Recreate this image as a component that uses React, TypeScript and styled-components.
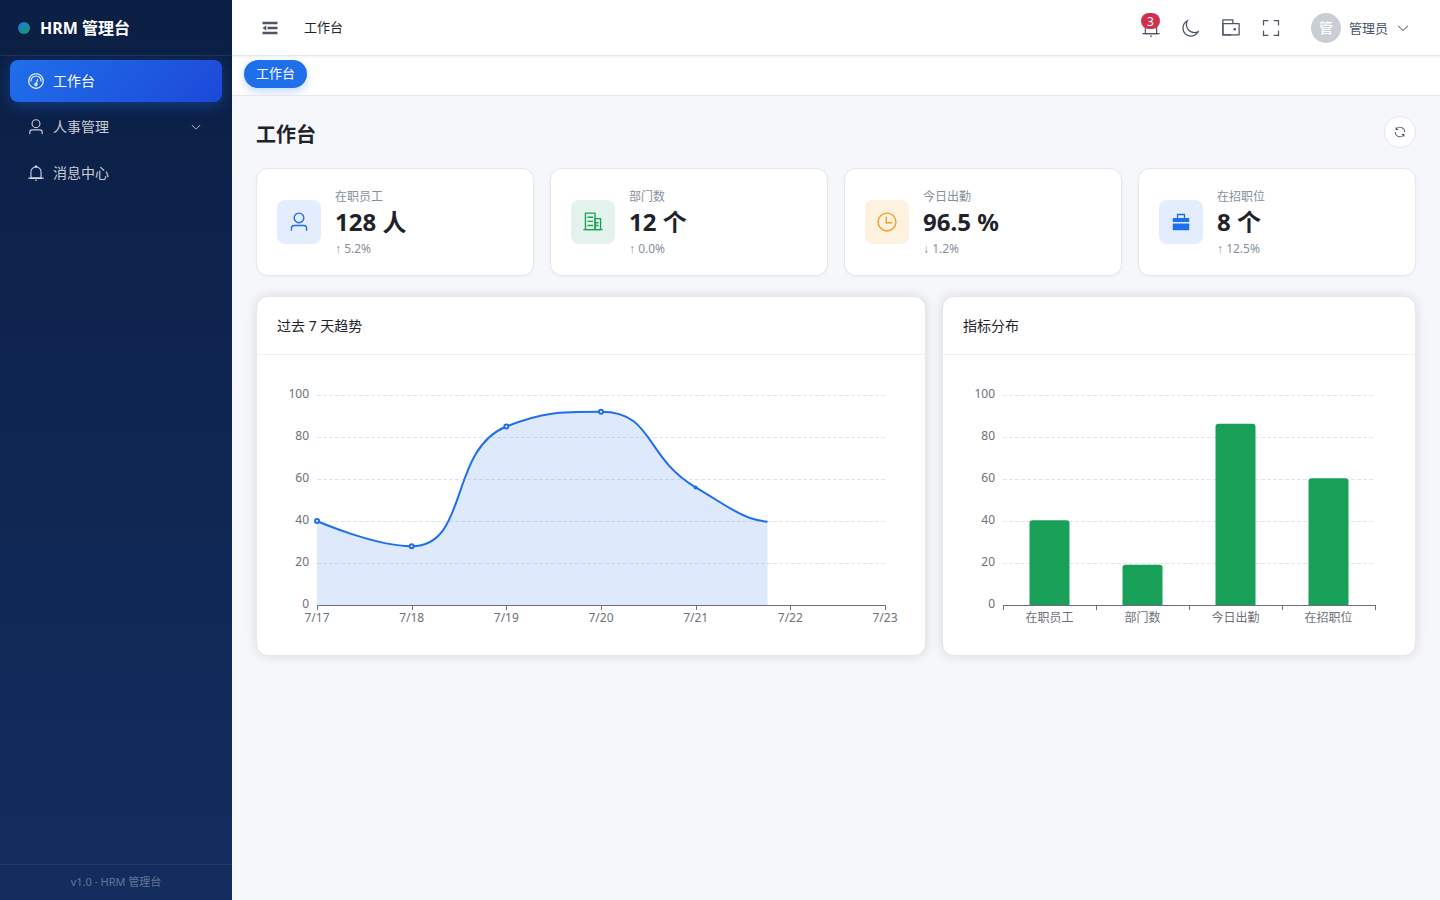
import React from "react";
import styled, { createGlobalStyle } from "styled-components";

const GlobalStyle = createGlobalStyle`
  *, *::before, *::after { box-sizing: border-box; }
  body {
    margin: 0;
    background: #f5f7fb;
    color: #1f2329;
    font-family: "Noto Sans", "Noto Sans CJK SC", sans-serif;
    font-size: 14px;
  }
  button { font: inherit; color: inherit; padding: 0; border: 0; background: none; cursor: pointer; }
  a { color: inherit; text-decoration: none; }
  h1, h2, p { margin: 0; }
`;

const icons = {
  odometer: [
    "M512 896a384 384 0 1 0 0-768 384 384 0 0 0 0 768m0 64a448 448 0 1 1 0-896 448 448 0 0 1 0 896",
    "M192 512a320 320 0 1 1 640 0 32 32 0 1 1-64 0 256 256 0 1 0-512 0 32 32 0 0 1-64 0",
    "M570.432 627.84A96 96 0 1 1 509.568 608l60.992-187.776A32 32 0 1 1 631.424 440l-60.992 187.776zM502.08 734.464a32 32 0 1 0 19.84-60.928 32 32 0 0 0-19.84 60.928",
  ],
  user: [
    "M512 512a192 192 0 1 0 0-384 192 192 0 0 0 0 384m0 64a256 256 0 1 1 0-512 256 256 0 0 1 0 512m320 320v-96a96 96 0 0 0-96-96H288a96 96 0 0 0-96 96v96a32 32 0 1 1-64 0v-96a160 160 0 0 1 160-160h448a160 160 0 0 1 160 160v96a32 32 0 1 1-64 0",
  ],
  bell: [
    "M512 64a64 64 0 0 1 64 64v64H448v-64a64 64 0 0 1 64-64",
    "M256 768h512V448a256 256 0 1 0-512 0zm256-640a320 320 0 0 1 320 320v384H192V448a320 320 0 0 1 320-320",
    "M96 768h832q32 0 32 32t-32 32H96q-32 0-32-32t32-32m352 128h128a64 64 0 0 1-128 0",
  ],
  moon: [
    "M240.448 240.448a384 384 0 1 0 559.424 525.696 448 448 0 0 1-542.016-542.08 391 391 0 0 0-17.408 16.384m181.056 362.048a384 384 0 0 0 525.632 16.384A448 448 0 1 1 405.056 76.8a384 384 0 0 0 16.448 525.696",
  ],
  wallet: [
    "M640 288h-64V128H128v704h384v32a32 32 0 0 0 32 32H96a32 32 0 0 1-32-32V96a32 32 0 0 1 32-32h512a32 32 0 0 1 32 32z",
    "M128 320v512h768V320zm-32-64h832a32 32 0 0 1 32 32v576a32 32 0 0 1-32 32H96a32 32 0 0 1-32-32V288a32 32 0 0 1 32-32",
    "M704 640a64 64 0 1 1 0-128 64 64 0 0 1 0 128",
  ],
  fullScreen: [
    "m160 96.064 192 .192a32 32 0 0 1 0 64l-192-.192V352a32 32 0 0 1-64 0V96h64zm0 831.872V928H96V672a32 32 0 1 1 64 0v191.936l192-.192a32 32 0 1 1 0 64zM864 96.064V96h64v256a32 32 0 1 1-64 0V160.064l-192 .192a32 32 0 1 1 0-64zm0 831.872-192-.192a32 32 0 0 1 0-64l192 .192V672a32 32 0 1 1 64 0v256h-64z",
  ],
  clock: [
    "M512 896a384 384 0 1 0 0-768 384 384 0 0 0 0 768m0 64a448 448 0 1 1 0-896 448 448 0 0 1 0 896",
    "M480 256a32 32 0 0 1 32 32v256a32 32 0 0 1-64 0V288a32 32 0 0 1 32-32",
    "M480 512h256q32 0 32 32t-32 32H480q-32 0-32-32t32-32",
  ],
  building: [
    "M192 128v704h384V128zm-32-64h448a32 32 0 0 1 32 32v768a32 32 0 0 1-32 32H160a32 32 0 0 1-32-32V96a32 32 0 0 1 32-32",
    "M256 256h256v64H256zm0 192h256v64H256zm0 192h256v64H256zm384-128h128v64H640zm0 128h128v64H640zM64 832h896v64H64z",
    "M640 384v448h192V384zm-32-64h256a32 32 0 0 1 32 32v512a32 32 0 0 1-32 32H608a32 32 0 0 1-32-32V352a32 32 0 0 1 32-32",
  ],
  briefcase: ["M320 320V128h384v192h192v192H128V320zM128 576h768v320H128zm256-256h256.064V192H384z"],
  refresh: [
    "M771.776 794.88A384 384 0 0 1 128 512h64a320 320 0 0 0 555.712 216.448H654.72a32 32 0 1 1 0-64h149.056a32 32 0 0 1 32 32v148.928a32 32 0 1 1-64 0v-50.56zM276.288 295.616h92.992a32 32 0 0 1 0 64H220.16a32 32 0 0 1-32-32V178.56a32 32 0 0 1 64 0v50.56A384 384 0 0 1 896.128 512h-64a320 320 0 0 0-555.776-216.384z",
  ],
  arrowDown: [
    "M831.872 340.864 512 652.672 192.128 340.864a30.592 30.592 0 0 0-42.752 0 29.12 29.12 0 0 0 0 41.6L489.664 714.24a32 32 0 0 0 44.672 0l340.288-331.712a29.12 29.12 0 0 0 0-41.728 30.592 30.592 0 0 0-42.752 0z",
  ],
  fold: ["M896 192H128v128h768zm0 256H384v128h512zm0 256H128v128h768zM320 384 128 512l192 128z"],
};

type IconName = keyof typeof icons;

const Svg = styled.svg`
  display: block;
  flex: none;
  fill: currentColor;
`;

function Icon({ name, size }: { name: IconName; size: number }) {
  return (
    <Svg viewBox="0 0 1024 1024" width={size} height={size} aria-hidden="true">
      {icons[name].map((d) => (
        <path key={d} d={d} />
      ))}
    </Svg>
  );
}

/* ---------- shell ---------- */

const Shell = styled.div`
  display: flex;
  min-height: 100vh;
`;

const Sidebar = styled.aside`
  display: flex;
  flex-direction: column;
  flex: none;
  width: 232px;
  background: linear-gradient(180deg, #0b1f44 0%, #132d5f 100%);
  color: #fff;
`;

const Brand = styled.div`
  display: flex;
  align-items: center;
  gap: 10px;
  height: 56px;
  padding: 0 18px;
  border-bottom: 1px solid rgba(255, 255, 255, 0.08);
  font-size: 16px;
  font-weight: 700;
`;

const BrandName = styled.span`
  padding-bottom: 2px;
`;

const BrandDot = styled.span`
  width: 12px;
  height: 12px;
  border-radius: 50%;
  background: linear-gradient(135deg, #1f6feb, #18a058);
`;

const Menu = styled.nav`
  display: flex;
  flex-direction: column;
  flex: 1;
  gap: 4px;
  padding: 4px 10px;
`;

const MenuItem = styled.a<{ $active?: boolean }>`
  display: flex;
  align-items: center;
  height: 42px;
  padding: 0 20px 0 14px;
  border-radius: 8px;
  color: ${(p) => (p.$active ? "#fff" : "rgba(255, 255, 255, 0.78)")};
  background: ${(p) => (p.$active ? "linear-gradient(135deg, #1f6feb, #1d48d8)" : "none")};
  box-shadow: ${(p) => (p.$active ? "0 4px 14px rgba(31, 111, 235, 0.35)" : "none")};
`;

const MenuIcon = styled.span`
  display: flex;
  justify-content: center;
  width: 24px;
  margin-right: 5px;
`;

const MenuLabel = styled.span`
  flex: 1;
  padding-bottom: 2px;
`;

const Version = styled.footer`
  height: 36px;
  border-top: 1px solid rgba(255, 255, 255, 0.08);
  color: rgba(255, 255, 255, 0.35);
  font-size: 11px;
  line-height: 33px;
  text-align: center;
`;

const Page = styled.div`
  display: flex;
  flex-direction: column;
  flex: 1;
  min-width: 0;
`;

const Header = styled.header`
  display: flex;
  align-items: center;
  height: 56px;
  padding: 0 24px 0 22px;
  background: #fff;
  border-bottom: 1px solid #e5e7eb;
  box-shadow: 0 1px 3px rgba(0, 0, 0, 0.06);
  color: #4b5565;
  position: relative;
`;

const IconButton = styled.button`
  display: flex;
  align-items: center;
  justify-content: center;
  position: relative;
  width: 32px;
  height: 32px;
`;

const Crumb = styled.span`
  margin-left: 18px;
  padding-bottom: 2px;
  color: #1f2329;
  font-size: 13px;
`;

const Tools = styled.div`
  display: flex;
  gap: 8px;
  margin-left: auto;
`;

const Badge = styled.span`
  position: absolute;
  top: 1px;
  left: 6px;
  width: 19px;
  height: 16px;
  border-radius: 8px;
  background: #d03050;
  color: #fff;
  font-size: 12px;
  line-height: 17px;
  text-align: center;
`;

const UserButton = styled.button`
  display: flex;
  align-items: center;
  gap: 8px;
  margin-left: 18px;
  padding: 0 6px;
  font-size: 13px;
`;

const Avatar = styled.span`
  width: 30px;
  height: 30px;
  border-radius: 50%;
  background: #c9cdd4;
  color: #fff;
  font-size: 14px;
  font-weight: 500;
  line-height: 30px;
  text-align: center;
`;

const TabBar = styled.nav`
  height: 40px;
  padding: 4px 12px;
  background: #fff;
  border-bottom: 1px solid #e5e7eb;
  overflow: hidden;
`;

const Tab = styled.a`
  display: inline-block;
  height: 28px;
  padding: 0 12px;
  border-radius: 14px;
  background: #1f6feb;
  box-shadow: 0 4px 10px rgba(31, 111, 235, 0.25);
  color: #fff;
  font-size: 13px;
  line-height: 26px;
`;

const Main = styled.main`
  display: flex;
  flex-direction: column;
  gap: 20px;
  padding: 20px 24px;
`;

const TitleRow = styled.div`
  display: flex;
  align-items: center;
  justify-content: space-between;
`;

const Title = styled.h1`
  padding-top: 6px;
  font-size: 20px;
  font-weight: 700;
  line-height: 26px;
`;

const RefreshButton = styled(IconButton)`
  border: 1px solid #e5e7eb;
  border-radius: 50%;
  background: #fff;
  color: #4b5565;
`;

/* ---------- statistics ---------- */

const Stats = styled.section`
  display: grid;
  grid-template-columns: repeat(4, 1fr);
  gap: 16px;
`;

const StatCard = styled.article`
  display: flex;
  align-items: center;
  gap: 14px;
  padding: 16px 20px;
  border: 1px solid #e5e7eb;
  border-radius: 12px;
  background: #fff;
  box-shadow: 0 1px 3px rgba(0, 0, 0, 0.04);
`;

const tones = {
  blue: { color: "#1f6feb", back: "#e4edfd" },
  green: { color: "#18a058", back: "#e3f3eb" },
  orange: { color: "#f0a020", back: "#fdf1df" },
};

const StatIcon = styled.span<{ $tone: keyof typeof tones }>`
  display: flex;
  align-items: center;
  justify-content: center;
  width: 44px;
  height: 44px;
  border-radius: 8px;
  color: ${(p) => tones[p.$tone].color};
  background: ${(p) => tones[p.$tone].back};
`;

const StatLabel = styled.p`
  color: #86909c;
  font-size: 12px;
  line-height: 24px;
`;

const StatValue = styled.p`
  font-size: 24px;
  font-weight: 700;
  line-height: 26px;
`;

const StatDelta = styled.p`
  margin-top: 4px;
  color: #86909c;
  font-size: 12px;
  line-height: 20px;
`;

const Arrow = styled.span`
  font-family: "Liberation Sans", sans-serif;
`;

const stats: {
  label: string;
  value: string;
  arrow: string;
  delta: string;
  icon: IconName;
  tone: keyof typeof tones;
}[] = [
  { label: "在职员工", value: "128 人", arrow: "↑", delta: "5.2%", icon: "user", tone: "blue" },
  { label: "部门数", value: "12 个", arrow: "↑", delta: "0.0%", icon: "building", tone: "green" },
  { label: "今日出勤", value: "96.5 %", arrow: "↓", delta: "1.2%", icon: "clock", tone: "orange" },
  { label: "在招职位", value: "8 个", arrow: "↑", delta: "12.5%", icon: "briefcase", tone: "blue" },
];

/* ---------- charts ---------- */

const ChartRow = styled.section`
  display: flex;
  margin: 0 -8px;
`;

const ChartCol = styled.div<{ $span: number }>`
  width: ${(p) => (p.$span / 24) * 100}%;
  padding: 0 8px;
`;

const ChartCard = styled.article`
  border: 1px solid #e5e7eb;
  border-radius: 12px;
  background: #fff;
  box-shadow: 0 0 12px rgba(0, 0, 0, 0.12);
  overflow: hidden;
`;

const ChartTitle = styled.h2`
  padding: 18px 20px;
  border-bottom: 1px solid #f0f1f3;
  font-size: 14px;
  font-weight: 400;
  line-height: 21px;
`;

const ChartBody = styled.div`
  padding: 20px;
`;

const Plot = styled.svg`
  display: block;
  width: 100%;
  height: auto;
  overflow: visible;
  font-size: 12px;
`;

const LEFT = 40;
const TOP = 20;
const BASE = 230;
const levels = [0, 20, 40, 60, 80, 100];
const yOf = (v: number) => BASE - ((BASE - TOP) * v) / 100;

function Grid({ right }: { right: number }) {
  return (
    <g>
      {levels.map((v) => (
        <g key={v}>
          {v > 0 && (
            <line
              x1={LEFT}
              x2={right}
              y1={yOf(v) + 0.5}
              y2={yOf(v) + 0.5}
              stroke="#e0e6f1"
              strokeDasharray="4 2"
            />
          )}
          <text x={LEFT - 8} y={yOf(v) + 3} textAnchor="end" fill="#6e7079">
            {v}
          </text>
        </g>
      ))}
    </g>
  );
}

function Axis({ right, ticks }: { right: number; ticks: number[] }) {
  return (
    <g stroke="#6e7079">
      <line x1={LEFT} x2={right + 1} y1={BASE + 0.5} y2={BASE + 0.5} />
      {ticks.map((x) => (
        <line key={x} x1={Math.round(x) + 0.5} x2={Math.round(x) + 0.5} y1={BASE} y2={BASE + 5} />
      ))}
    </g>
  );
}

type Point = [number, number];

const between = (v: number, a: number, b: number) => Math.max(Math.min(v, Math.max(a, b)), Math.min(a, b));

// Bezier path through all points whose handles never overshoot a neighbour.
function smoothPath(pts: Point[], smooth = 0.5) {
  let d = `M${pts[0][0]} ${pts[0][1]}`;
  let out: Point = pts[0];
  for (let i = 1; i < pts.length; i++) {
    const prev = pts[i - 1];
    const cur = pts[i];
    const next = pts[i + 1];
    let handle: Point = cur;
    let nextOut: Point = cur;
    if (next) {
      const lenPrev = Math.hypot(cur[0] - prev[0], cur[1] - prev[1]);
      const lenNext = Math.hypot(next[0] - cur[0], next[1] - cur[1]);
      const ratio = lenNext / (lenNext + lenPrev);
      const axis = (k: 0 | 1): [number, number] => {
        let after = between(cur[k] + (next[k] - prev[k]) * smooth * ratio, next[k], cur[k]);
        const before = between(cur[k] - ((after - cur[k]) * lenPrev) / lenNext, prev[k], cur[k]);
        after = cur[k] + ((cur[k] - before) * lenNext) / lenPrev;
        return [before, after];
      };
      const [bx, ax] = axis(0);
      const [by, ay] = axis(1);
      handle = [bx, by];
      nextOut = [ax, ay];
    }
    d += `C${out[0]} ${out[1]} ${handle[0]} ${handle[1]} ${cur[0]} ${cur[1]}`;
    out = nextOut;
  }
  return d;
}

const trend = [40, 28, 85, 92, 56, 39, 64];
const days = ["7/17", "7/18", "7/19", "7/20", "7/21", "7/22", "7/23"];

function TrendChart() {
  const right = 608;
  const xs = days.map((_, i) => LEFT + ((right - LEFT) * i) / 6);
  const pts = trend.map((v, i): Point => [xs[i], yOf(v)]);
  const line = smoothPath(pts);
  return (
    <Plot viewBox="0 0 628 260" role="img" aria-label="过去 7 天趋势">
      <clipPath id="revealed">
        <rect x="36" y="0" width="454.5" height="260" />
      </clipPath>
      <Grid right={right} />
      <path
        d={`${line}L${right} ${BASE}L${LEFT} ${BASE}Z`}
        fill="#1f6feb"
        fillOpacity="0.15"
        clipPath="url(#revealed)"
      />
      <Axis right={right} ticks={xs} />
      <path d={line} fill="none" stroke="#1f6feb" strokeWidth="2" clipPath="url(#revealed)" />
      {pts.slice(0, 5).map(([x, y], i) => (
        <circle key={x} cx={x} cy={y} r={i < 4 ? 2 : 1} fill={i < 4 ? "#fff" : "#1f6feb"} stroke="#1f6feb" strokeWidth="2" />
      ))}
      {days.map((day, i) => (
        <text key={day} x={xs[i]} y={247} textAnchor="middle" fill="#6e7079">
          {day}
        </text>
      ))}
    </Plot>
  );
}

const bars = [
  { name: "在职员工", value: 40.3 },
  { name: "部门数", value: 19.2 },
  { name: "今日出勤", value: 86.3 },
  { name: "在招职位", value: 60.4 },
];

function BarChart() {
  const right = 412;
  const step = (right - LEFT) / bars.length;
  return (
    <Plot viewBox="0 0 432 260" role="img" aria-label="指标分布">
      <Grid right={right - 2} />
      {bars.map((bar, i) => {
        const x = LEFT + step * i + step / 2 - 20;
        const y = yOf(bar.value);
        return (
          <g key={bar.name}>
            <path
              d={`M${x} ${BASE}V${y + 3}q0 -3 3 -3h34q3 0 3 3V${BASE}Z`}
              fill="#18a058"
            />
            <text x={x + 20} y={247} textAnchor="middle" fill="#6e7079">
              {bar.name}
            </text>
          </g>
        );
      })}
      <Axis right={right} ticks={[0, 1, 2, 3, 4].map((i) => LEFT + step * i)} />
    </Plot>
  );
}

export default function App() {
  return (
    <>
      <GlobalStyle />
      <Shell>
        <Sidebar>
          <Brand>
            <BrandDot />
            <BrandName>HRM 管理台</BrandName>
          </Brand>
          <Menu>
            <MenuItem href="#dashboard" $active>
              <MenuIcon><Icon name="odometer" size={18} /></MenuIcon>
              <MenuLabel>工作台</MenuLabel>
            </MenuItem>
            <MenuItem href="#people">
              <MenuIcon><Icon name="user" size={18} /></MenuIcon>
              <MenuLabel>人事管理</MenuLabel>
              <Icon name="arrowDown" size={12} />
            </MenuItem>
            <MenuItem href="#messages">
              <MenuIcon><Icon name="bell" size={18} /></MenuIcon>
              <MenuLabel>消息中心</MenuLabel>
            </MenuItem>
          </Menu>
          <Version>v1.0 · HRM 管理台</Version>
        </Sidebar>
        <Page>
          <Header>
            <IconButton type="button" aria-label="折叠菜单">
              <Icon name="fold" size={20} />
            </IconButton>
            <Crumb>工作台</Crumb>
            <Tools>
              <IconButton type="button" aria-label="通知">
                <Icon name="bell" size={20} />
                <Badge>3</Badge>
              </IconButton>
              <IconButton type="button" aria-label="深色模式">
                <Icon name="moon" size={20} />
              </IconButton>
              <IconButton type="button" aria-label="钱包">
                <Icon name="wallet" size={20} />
              </IconButton>
              <IconButton type="button" aria-label="全屏">
                <Icon name="fullScreen" size={20} />
              </IconButton>
            </Tools>
            <UserButton type="button">
              <Avatar>管</Avatar>
              管理员
              <Icon name="arrowDown" size={14} />
            </UserButton>
          </Header>
          <TabBar>
            <Tab href="#dashboard">工作台</Tab>
          </TabBar>
          <Main>
            <TitleRow>
              <Title>工作台</Title>
              <RefreshButton type="button" aria-label="刷新">
                <Icon name="refresh" size={14} />
              </RefreshButton>
            </TitleRow>
            <Stats>
              {stats.map((s) => (
                <StatCard key={s.label}>
                  <StatIcon $tone={s.tone}>
                    <Icon name={s.icon} size={22} />
                  </StatIcon>
                  <div>
                    <StatLabel>{s.label}</StatLabel>
                    <StatValue>{s.value}</StatValue>
                    <StatDelta>
                      <Arrow>{s.arrow}</Arrow> {s.delta}
                    </StatDelta>
                  </div>
                </StatCard>
              ))}
            </Stats>
            <ChartRow>
              <ChartCol $span={14}>
                <ChartCard>
                  <ChartTitle>过去 7 天趋势</ChartTitle>
                  <ChartBody>
                    <TrendChart />
                  </ChartBody>
                </ChartCard>
              </ChartCol>
              <ChartCol $span={10}>
                <ChartCard>
                  <ChartTitle>指标分布</ChartTitle>
                  <ChartBody>
                    <BarChart />
                  </ChartBody>
                </ChartCard>
              </ChartCol>
            </ChartRow>
          </Main>
        </Page>
      </Shell>
    </>
  );
}
